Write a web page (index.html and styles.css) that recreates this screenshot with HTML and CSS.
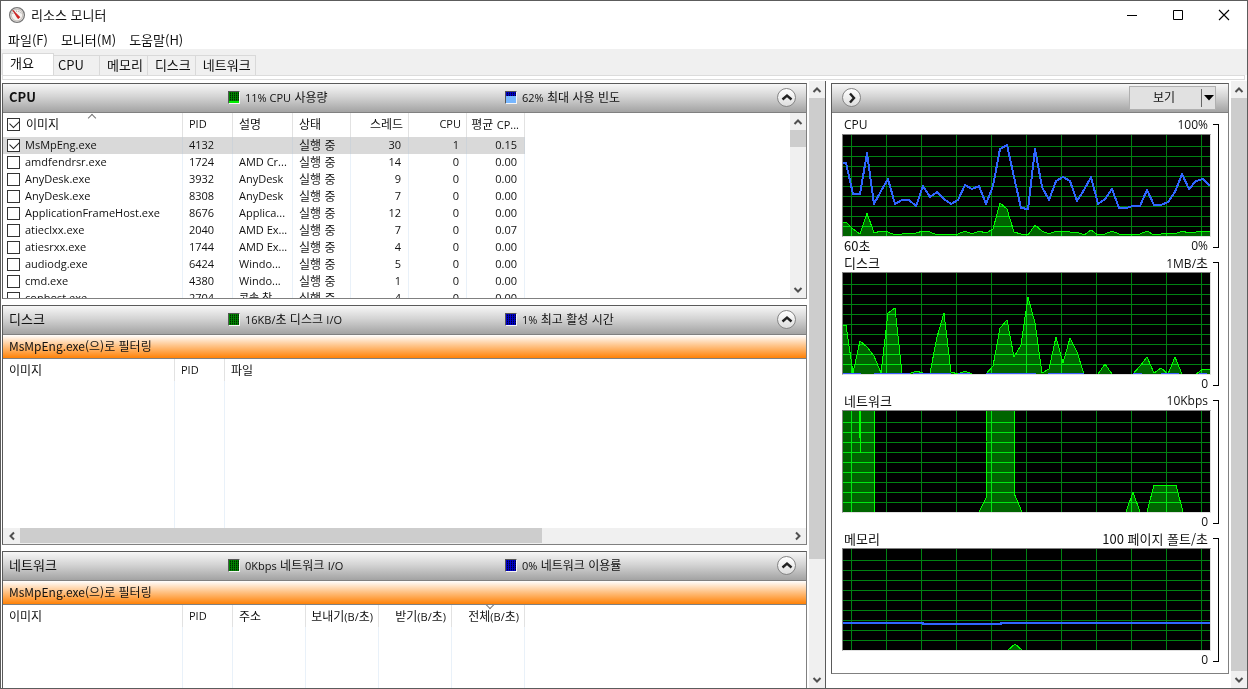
FILE: index.html
```html
<!DOCTYPE html>
<html lang="ko">
<head>
<meta charset="utf-8">
<title>리소스 모니터</title>
<link rel="stylesheet" href="styles.css">
</head>
<body>
<div class="window">
  <header class="titlebar">
    <svg class="app-icon" width="18" height="18" viewBox="0 0 18 18" aria-hidden="true">
      <circle cx="9" cy="9" r="7.4" fill="#f4f2f0" stroke="#777" stroke-width="1.3"/>
      <circle cx="9" cy="9" r="5.8" fill="none" stroke="#c9c4c0" stroke-width="1.2"/>
      <path d="M4.5 8A5 5 0 0 1 13.5 8" fill="none" stroke="#8a8a8a" stroke-dasharray="1 1.3"/>
      <path d="M4.8 4.2L11.8 11.2L10 12.6Z" fill="#d81e1e" stroke="#c01818" stroke-width=".8"/>
    </svg>
    <h1 class="app-title">리소스 모니터</h1>
    <div class="win-controls">
      <button class="win-btn" aria-label="최소화"><svg width="12" height="12" viewBox="0 0 12 12"><path d="M1 6.5h10" stroke="#000" fill="none"/></svg></button>
      <button class="win-btn" aria-label="최대화"><svg width="12" height="12" viewBox="0 0 12 12"><path d="M1.5 1.5h9v9h-9z" stroke="#000" fill="none"/></svg></button>
      <button class="win-btn" aria-label="닫기"><svg width="12" height="12" viewBox="0 0 12 12"><path d="M1 1l10 10M11 1L1 11" stroke="#000" stroke-width="1.1" fill="none"/></svg></button>
    </div>
  </header>
  <nav class="menubar">
    <button class="menu-item">파일(F)</button>
    <button class="menu-item">모니터(M)</button>
    <button class="menu-item">도움말(H)</button>
  </nav>
  <div class="tabs" role="tablist">
    <button class="tab tab-active" role="tab" aria-selected="true">개요</button>
    <button class="tab tab-wide" role="tab">CPU</button>
    <button class="tab" role="tab">메모리</button>
    <button class="tab" role="tab">디스크</button>
    <button class="tab" role="tab">네트워크</button>
  </div>
  <div class="tab-edge"></div>

  <div class="content">
    <main class="sections">
      <section class="panel">
        <div class="panel-head">
          <h2 class="panel-title panel-title-bold">CPU</h2>
          <span class="stat"><i class="meter meter-green meter-low"></i><span><span class="latin">11% CPU</span> 사용량</span></span>
          <span class="stat"><i class="meter meter-blue meter-high"></i><span><span class="latin">62%</span> 최대 사용 빈도</span></span>
          <button class="round" aria-label="접기"><svg width="12" height="12" viewBox="0 0 12 12"><path d="M1.5 8.5L6 4.5L10.5 8.5" fill="none" stroke="#222" stroke-width="2.4"/></svg></button>
        </div>
        <div class="panel-body">
          <div class="table-area">
            <table class="grid cpu-grid">
              <colgroup><col class="c-image"><col class="c-pid"><col class="c-desc"><col class="c-num"><col class="c-num"><col class="c-num"><col class="c-num"></colgroup>
              <thead><tr>
                <th class="sorted"><label class="pick"><input type="checkbox" class="check" checked><span class="pick-all">이미지</span></label><i class="sort sort-up"></i></th>
                <th class="latin">PID</th><th>설명</th><th>상태</th><th class="num">스레드</th><th class="num latin">CPU</th><th class="num">평균 <span class="latin">CP...</span></th>
              </tr></thead>
              <tbody id="processes"></tbody>
            </table>
          </div>
          <div class="vscroll">
            <button class="arrow" aria-label="위로"><svg width="10" height="8" viewBox="0 0 10 8"><path d="M1.5 6L5 2.5L8.5 6" fill="none" stroke="#505050" stroke-width="2"/></svg></button>
            <div class="thumb thumb-short"></div>
            <div class="track"></div>
            <button class="arrow" aria-label="아래로"><svg width="10" height="8" viewBox="0 0 10 8"><path d="M1.5 2L5 5.5L8.5 2" fill="none" stroke="#505050" stroke-width="2"/></svg></button>
          </div>
        </div>
      </section>

      <section class="panel">
        <div class="panel-head">
          <h2 class="panel-title">디스크</h2>
          <span class="stat"><i class="meter meter-green"></i><span><span class="latin">16KB/</span>초 디스크 <span class="latin">I/O</span></span></span>
          <span class="stat"><i class="meter meter-blue"></i><span><span class="latin">1%</span> 최고 활성 시간</span></span>
          <button class="round" aria-label="접기"><svg width="12" height="12" viewBox="0 0 12 12"><path d="M1.5 8.5L6 4.5L10.5 8.5" fill="none" stroke="#222" stroke-width="2.4"/></svg></button>
        </div>
        <p class="filter">MsMpEng.exe(으)로 필터링</p>
        <div class="panel-body panel-body-stack">
          <div class="table-area">
            <table class="grid disk-grid">
              <colgroup><col class="c-disk-image"><col class="c-pid"><col></colgroup>
              <thead><tr><th>이미지</th><th class="latin">PID</th><th class="open">파일</th></tr></thead>
              <tbody><tr><td></td><td></td><td class="open"></td></tr></tbody>
            </table>
          </div>
          <div class="hscroll">
            <button class="arrow" aria-label="왼쪽으로"><svg width="8" height="10" viewBox="0 0 8 10"><path d="M6 1.5L2.5 5L6 8.5" fill="none" stroke="#505050" stroke-width="2"/></svg></button>
            <div class="thumb thumb-wide"></div>
            <div class="track"></div>
            <button class="arrow" aria-label="오른쪽으로"><svg width="8" height="10" viewBox="0 0 8 10"><path d="M2 1.5L5.5 5L2 8.5" fill="none" stroke="#505050" stroke-width="2"/></svg></button>
          </div>
        </div>
      </section>

      <section class="panel panel-last">
        <div class="panel-head">
          <h2 class="panel-title">네트워크</h2>
          <span class="stat"><i class="meter meter-green"></i><span><span class="latin">0Kbps</span> 네트워크 <span class="latin">I/O</span></span></span>
          <span class="stat"><i class="meter meter-blue"></i><span><span class="latin">0%</span> 네트워크 이용률</span></span>
          <button class="round" aria-label="접기"><svg width="12" height="12" viewBox="0 0 12 12"><path d="M1.5 8.5L6 4.5L10.5 8.5" fill="none" stroke="#222" stroke-width="2.4"/></svg></button>
        </div>
        <p class="filter">MsMpEng.exe(으)로 필터링</p>
        <div class="panel-body panel-body-fill">
          <div class="table-area">
            <table class="grid net-grid">
              <colgroup><col class="c-image"><col class="c-pid"><col class="c-net"><col class="c-net"><col class="c-net"><col class="c-net"></colgroup>
              <thead><tr><th>이미지</th><th class="latin">PID</th><th>주소</th><th class="num">보내기<span class="latin">(B/</span>초<span class="latin">)</span></th><th class="num">받기<span class="latin">(B/</span>초<span class="latin">)</span></th><th class="num sorted">전체<span class="latin">(B/</span>초<span class="latin">)</span><i class="sort sort-down"></i></th></tr></thead>
              <tbody><tr><td></td><td></td><td></td><td></td><td></td><td></td></tr></tbody>
            </table>
          </div>
        </div>
      </section>
    </main>

    <div class="vscroll vscroll-main">
      <button class="arrow" aria-label="위로"><svg width="10" height="8" viewBox="0 0 10 8"><path d="M1.5 6L5 2.5L8.5 6" fill="none" stroke="#505050" stroke-width="2"/></svg></button>
      <div class="thumb thumb-main"></div>
      <div class="track"></div>
      <button class="arrow" aria-label="아래로"><svg width="10" height="8" viewBox="0 0 10 8"><path d="M1.5 2L5 5.5L8.5 2" fill="none" stroke="#505050" stroke-width="2"/></svg></button>
    </div>

    <aside class="graphs">
      <div class="panel graph-panel">
        <div class="panel-head graph-head">
          <button class="round" aria-label="그래프 숨기기"><svg width="12" height="12" viewBox="0 0 12 12"><path d="M4 1.5L8 6L4 10.5" fill="none" stroke="#222" stroke-width="2.4"/></svg></button>
          <div class="view-split">
            <button class="view-btn">보기</button>
            <button class="view-drop" aria-label="보기 옵션"><svg width="10" height="6" viewBox="0 0 10 6"><path d="M0 0h10L5 5.5z" fill="#000"/></svg></button>
          </div>
        </div>
        <div class="graph-list">
          <div class="graph">
            <div class="graph-main">
              <div class="graph-row graph-top"><span class="latin">CPU</span><span class="latin">100%</span></div>
              <svg class="chart" id="chart-cpu" viewBox="0 0 367 101" preserveAspectRatio="none"></svg>
              <div class="graph-row graph-foot"><span>60초</span><span class="latin">0%</span></div>
            </div>
            <div class="bracket"></div>
          </div>
          <div class="graph">
            <div class="graph-main">
              <div class="graph-row graph-top"><span>디스크</span><span><span class="latin">1MB/</span>초</span></div>
              <svg class="chart" id="chart-disk" viewBox="0 0 367 101" preserveAspectRatio="none"></svg>
              <div class="graph-row graph-foot"><span></span><span class="latin">0</span></div>
            </div>
            <div class="bracket"></div>
          </div>
          <div class="graph">
            <div class="graph-main">
              <div class="graph-row graph-top"><span>네트워크</span><span class="latin">10Kbps</span></div>
              <svg class="chart" id="chart-net" viewBox="0 0 367 101" preserveAspectRatio="none"></svg>
              <div class="graph-row graph-foot"><span></span><span class="latin">0</span></div>
            </div>
            <div class="bracket"></div>
          </div>
          <div class="graph">
            <div class="graph-main">
              <div class="graph-row graph-top"><span>메모리</span><span>100 페이지 폴트/초</span></div>
              <svg class="chart" id="chart-mem" viewBox="0 0 367 101" preserveAspectRatio="none"></svg>
              <div class="graph-row graph-foot"><span></span><span class="latin">0</span></div>
            </div>
            <div class="bracket"></div>
          </div>
        </div>
      </div>
    </aside>

    <div class="vscroll vscroll-side">
      <button class="arrow" aria-label="위로"><svg width="10" height="8" viewBox="0 0 10 8"><path d="M1.5 6L5 2.5L8.5 6" fill="none" stroke="#505050" stroke-width="2"/></svg></button>
      <div class="thumb thumb-side"></div>
      <button class="arrow" aria-label="아래로"><svg width="10" height="8" viewBox="0 0 10 8"><path d="M1.5 2L5 5.5L8.5 2" fill="none" stroke="#505050" stroke-width="2"/></svg></button>
    </div>
  </div>
</div>
<script src="app.js"></script>
</body>
</html>
```
FILE: styles.css
```css
* { box-sizing: border-box; }
html, body { height: 100%; margin: 0; }
body {
  font-family: "Noto Sans CJK KR", sans-serif;
  font-size: 12px;
  line-height: 16px;
  color: #111;
  background: #fff;
}
button {
  font: inherit;
  color: inherit;
  background: none;
  border: 0;
  padding: 0;
  margin: 0;
}
h1, h2, p { margin: 0; font-weight: 400; }
svg { display: block; }
.latin { font-family: "Open Sans", "Noto Sans CJK KR", sans-serif; font-size: 11px; }

.window {
  height: 100%;
  display: flex;
  flex-direction: column;
  border: 1px solid #5c5c5c;
  overflow: hidden;
}

/* title, menu and tabs */
.titlebar { display: flex; align-items: center; height: 28px; flex: none; padding-left: 7px; }
.app-title { font-size: 13px; margin-left: 5px; flex: 1; }
.win-controls { display: flex; height: 100%; }
.win-btn { width: 46px; display: flex; align-items: center; justify-content: center; }
.menubar { display: flex; align-items: center; gap: 13px; height: 20px; flex: none; padding: 2px 0 0 7px; }
.menu-item { font-size: 13px; }
.tabs {
  display: flex;
  align-items: flex-end;
  height: 26px;
  flex: none;
  padding-left: 1px;
  background: #f0f0f0;
}
.tab {
  height: 20px;
  padding: 0 4px 2px 7px;
  font-size: 13px;
  border: 1px solid #d9d9d9;
  border-left: 0;
  border-bottom: 0;
}
.tab-wide { width: 46px; padding-left: 4px; text-align: left; }
.tab-active {
  width: 52px;
  height: 22px;
  padding: 0 7px 3px;
  text-align: left;
  border-left: 1px solid #d9d9d9;
  background: #fff;
}
.tab-edge {
  height: 5px;
  flex: none;
  margin: 0 2px 0 1px;
  border: 1px solid #dcdcdc;
  background: #fff;
}

.content { flex: 1; min-height: 0; display: flex; background: #fff; }

/* left sections */
.sections {
  flex: 1;
  min-width: 0;
  display: flex;
  flex-direction: column;
  gap: 6px;
  padding: 3px 2px 0 1px;
}
.panel { border: 1px solid #808080; border-color: #5a5a5a #808080 #808080 #5a5a5a; flex: none; background: #fff; }
.panel-last { flex: 1; min-height: 0; display: flex; flex-direction: column; border-bottom: 0; }
.panel-head {
  display: grid;
  grid-template-columns: 219px 277px 1fr auto;
  align-items: center;
  height: 29px;
  flex: none;
  padding: 0 10px 2px 6px;
  border-bottom: 1px solid #808080;
  background: linear-gradient(#f7f7f7, #d4d4d4 45%, #a3a3a3);
}
.panel-title { font-size: 13px; }
.panel-title-bold { font-weight: 700; }
.stat { display: flex; align-items: center; gap: 5px; }
.round {
  width: 19px;
  height: 19px;
  display: flex;
  align-items: center;
  justify-content: center;
  border: 1px solid #858585;
  border-radius: 50%;
  background: linear-gradient(#fff, #dedede);
}
.meter {
  width: 12px;
  height: 13px;
  border: 1px solid;
  border-color: #555 #f5f5f5 #f5f5f5 #555;
}
.meter-green {
  background:
    repeating-linear-gradient(0deg, #00860099 0 1px, transparent 1px 2px),
    repeating-linear-gradient(90deg, #008600 0 1px, #002800 1px 2px);
}
.meter-blue {
  background:
    repeating-linear-gradient(0deg, #0000d099 0 1px, transparent 1px 2px),
    repeating-linear-gradient(90deg, #0000d0 0 1px, #000030 1px 2px);
}
.meter-low {
  background:
    linear-gradient(transparent 80%, #00f000 80%),
    repeating-linear-gradient(0deg, #00860099 0 1px, transparent 1px 2px),
    repeating-linear-gradient(90deg, #008600 0 1px, #002800 1px 2px);
}
.meter-high {
  background:
    linear-gradient(transparent 38%, #76b6ff 38%),
    repeating-linear-gradient(0deg, #0000d099 0 1px, transparent 1px 2px),
    repeating-linear-gradient(90deg, #0000d0 0 1px, #000030 1px 2px);
}

.filter {
  height: 24px;
  flex: none;
  padding: 3px 6px;
  border-bottom: 1px solid #808080;
  background: linear-gradient(#fff, #ffc68c 45%, #ff8207);
}
.panel-body { display: flex; height: 185px; }
.panel-body-stack { flex-direction: column; }
.panel-body-fill { flex: 1; height: auto; min-height: 0; }
.table-area { flex: 1; min-width: 0; min-height: 0; overflow: hidden; }

/* tables */
.grid { table-layout: fixed; border-collapse: separate; border-spacing: 0; width: 522px; }
.disk-grid { width: 100%; height: 100%; }
.net-grid { height: 100%; }
.c-image { width: 180px; }
.c-disk-image { width: 172px; }
.c-pid { width: 50px; }
.c-desc { width: 60px; }
.c-num { width: 58px; }
.c-net { width: 73px; }
.grid th {
  height: 22px;
  padding: 0 5px 0 6px;
  font-weight: 400;
  text-align: left;
  white-space: nowrap;
  border-right: 1px solid #e2e2e2;
}
.cpu-grid th { height: 24px; padding-bottom: 2px; }
.grid td {
  height: 17px;
  padding: 0 6px 1px;
  line-height: 16px;
  white-space: nowrap;
  border-right: 1px solid #e9f1f9;
}
.grid th.num { text-align: right; padding-right: 5px; padding-left: 0; }
.grid td.num { text-align: right; padding-right: 7px; }
.grid .open { border-right: 0; }
.cpu-grid th:first-child, .cpu-grid td:first-child { padding-left: 4px; }
.grid .selected td { background: #d9d9d9; border-right-color: #cdd3d9; }
.sorted { position: relative; }
.sort {
  position: absolute;
  left: 48%;
  width: 6px;
  height: 6px;
  border: solid #777;
  border-width: 1px 0 0 1px;
}
.sort-up { top: 2px; transform: rotate(45deg); }
.sort-down { top: -3px; transform: rotate(225deg); }
.pick { display: flex; align-items: center; gap: 5px; }
.pick-all { padding-left: 1px; }
.check {
  appearance: none;
  position: relative;
  flex: none;
  width: 13px;
  height: 13px;
  margin: 0;
  border: 1px solid #333;
  background: #fff;
}
.check:checked::after {
  content: "";
  position: absolute;
  left: 2px;
  top: 1px;
  width: 8px;
  height: 5px;
  border: solid #222;
  border-width: 0 0 1px 1px;
  transform: rotate(-45deg);
}

/* scroll bars */
.vscroll { width: 16px; flex: none; display: flex; flex-direction: column; background: #f0f0f0; }
.hscroll { height: 16px; flex: none; display: flex; background: #f0f0f0; }
.arrow { width: 16px; height: 17px; flex: none; display: flex; align-items: center; justify-content: center; }
.hscroll .arrow { width: 17px; height: 16px; }
.thumb { background: #cdcdcd; flex: none; }
.track { flex: 1; }
.thumb-short { height: 17px; }
.thumb-wide { width: 65%; height: 15px; }
.vscroll-main { margin-top: 1px; }
.thumb-main { height: 76%; }
.vscroll-side { margin-top: 1px; }
.thumb-side { flex: 1; }

/* graphs */
.graphs { width: 406px; flex: none; margin-top: 1px; padding: 2px 2px 0 5px; border-left: 1px solid #5a5a5a; }
.graph-head { display: flex; justify-content: space-between; padding: 0 12px 1px 10px; }
.view-split { display: flex; align-items: center; width: 87px; height: 24px; border: 1px solid #b0b0b0; background: #e1e1e1; }
.view-btn { flex: 1; padding: 0 3px 2px 0; }
.view-drop { width: 14px; height: 18px; display: flex; align-items: center; justify-content: center; border-left: 1px solid #666; }
.graph-list { padding: 3px 9px 5px 10px; }
.graph { display: flex; gap: 2px; font-size: 13px; }
.graph .latin { font-size: 12px; }
.graph-main { flex: 1; min-width: 0; }
.graph-row { display: flex; justify-content: space-between; padding: 0 3px 0 2px; }
.graph-top { height: 18px; line-height: 17px; }
.graph-foot { height: 17px; line-height: 17px; }
.chart {
  width: 100%;
  height: 103px;
  background: #000;
  border: 1px solid;
  border-color: #808080 #e0e0e0 #e0e0e0 #808080;
}
.bracket { width: 6px; margin: 8px 0 6px; border: 1px solid #000; border-left: 0; }
.grid-line { stroke: #008212; fill: none; shape-rendering: crispEdges; }
.area { fill: #006400; mix-blend-mode: plus-lighter; shape-rendering: crispEdges; }
.edge { fill: none; stroke: #00ff00; stroke-width: 1; shape-rendering: crispEdges; }
.trend { fill: none; stroke: #2f66ff; stroke-width: 2; stroke-linejoin: round; shape-rendering: crispEdges; }
.base { fill: none; stroke: #3c5cff; stroke-width: 1; shape-rendering: crispEdges; }
```
FILE: app.js
```js
const processes = [
  ["MsMpEng.exe", "4132", "", "30", "1", "0.15"],
  ["amdfendrsr.exe", "1724", "AMD Cr...", "14", "0", "0.00"],
  ["AnyDesk.exe", "3932", "AnyDesk", "9", "0", "0.00"],
  ["AnyDesk.exe", "8308", "AnyDesk", "7", "0", "0.00"],
  ["ApplicationFrameHost.exe", "8676", "Applica...", "12", "0", "0.00"],
  ["atieclxx.exe", "2040", "AMD Ex...", "7", "0", "0.07"],
  ["atiesrxx.exe", "1744", "AMD Ex...", "4", "0", "0.00"],
  ["audiodg.exe", "6424", "Windo...", "5", "0", "0.00"],
  ["cmd.exe", "4380", "Windo...", "1", "0", "0.00"],
  ["conhost.exe", "2704", "콘솔 창...", "4", "0", "0.00"]
];

document.getElementById("processes").innerHTML = processes.map((p, i) => `
  <tr class="${i === 0 ? "selected" : ""}">
    <td class="latin"><label class="pick"><input type="checkbox" class="check"${i === 0 ? " checked" : ""}><span>${p[0]}</span></label></td>
    <td class="latin">${p[1]}</td><td class="latin">${p[2]}</td><td>실행 중</td>
    <td class="num latin">${p[3]}</td><td class="num latin">${p[4]}</td><td class="num latin">${p[5]}</td>
  </tr>`).join("");

// Samples are one step apart; the oldest one starts just inside the left edge.
const STEP = 7, START = 3, BASE = 101;

function series(heights) {
  const pts = heights.map((h, i) => [START + i * STEP, BASE - h]);
  return [[-1, BASE - heights[0]], ...pts];
}
function toPoints(pts) { return pts.map(p => p.join(",")).join(" "); }

function gridLines() {
  let d = "";
  for (let x = 8; x < 367; x += 35) d += `M${x + 0.5} 0V101`;
  for (let y = 11; y < 101; y += 10) d += `M0 ${y + 0.5}H367`;
  return `<path class="grid-line" d="${d}"/>`;
}
function area(pts) {
  const last = pts[pts.length - 1][0], first = pts[0][0];
  return `<polygon class="area" points="${first},${BASE} ${toPoints(pts)} ${last},${BASE}"/>
    <polyline class="edge" points="${toPoints(pts)}"/>`;
}
function draw(id, body) { document.getElementById(id).innerHTML = gridLines() + body; }

const cpuUse = [14, 7, 2, 23, 3, 5, 4, 1, 2, 3, 3, 5, 4, 1, 2, 1, 2, 5, 2, 5, 3, 7, 33, 27, 4, 2, 1,
  11, 5, 2, 5, 5, 4, 4, 1, 6, 1, 2, 5, 2, 1, 2, 2, 5, 1, 2, 3, 2, 5, 3, 4, 5, 4];
const cpuFreq = [73, 42, 42, 83, 32, 45, 57, 32, 36, 36, 30, 50, 39, 44, 37, 32, 36, 51, 47, 50, 32,
  50, 87, 91, 59, 28, 27, 87, 49, 36, 55, 59, 55, 35, 46, 59, 32, 37, 47, 28, 28, 30, 30, 46, 31, 31,
  34, 44, 62, 47, 55, 57, 50];
draw("chart-cpu", area(series(cpuUse)) + `<polyline class="trend" points="${toPoints(series(cpuFreq))}"/>`);

const disk = [49, 1, 33, 27, 18, 1, 61, 66, 1, 0, 3, 1, 1, 37, 61, 2, 0, 3, 0, 0, 0, 8, 46, 54, 17, 29,
  77, 51, 1, 5, 37, 11, 36, 22, 0, 0, 0, 10, 0, 0, 0, 0, 8, 17, 1, 6, 0, 17, 0, 0, 0, 5, 4];
draw("chart-disk", area(series(disk)) +
  `<path class="base" d="M0 100.5h18M31 100.5h36M70 100.5h38M115 100.5h12M143 100.5h50M205 100.5h36M290 100.5h9M318 100.5h18M356 100.5h8"/>`);

draw("chart-net",
  area([[-2, -2], [31, -2], [31, BASE]]) +
  area([[136, BASE], [143, 87], [143, 31], [144, -2], [171, -2], [171, 82], [179, BASE]]) +
  area([[283, BASE], [290, 81], [297, BASE]]) +
  area([[304, BASE], [311, 74], [333, 74], [340, BASE]]) +
  `<path class="edge" d="M16.5 0V27M17.5 0V42"/>`);

draw("chart-mem",
  area([[165, BASE], [172, 95], [179, BASE]]) +
  `<polyline class="trend" points="0,74 80,74 80,75 158,75 158,74 367,74"/>`);
```
